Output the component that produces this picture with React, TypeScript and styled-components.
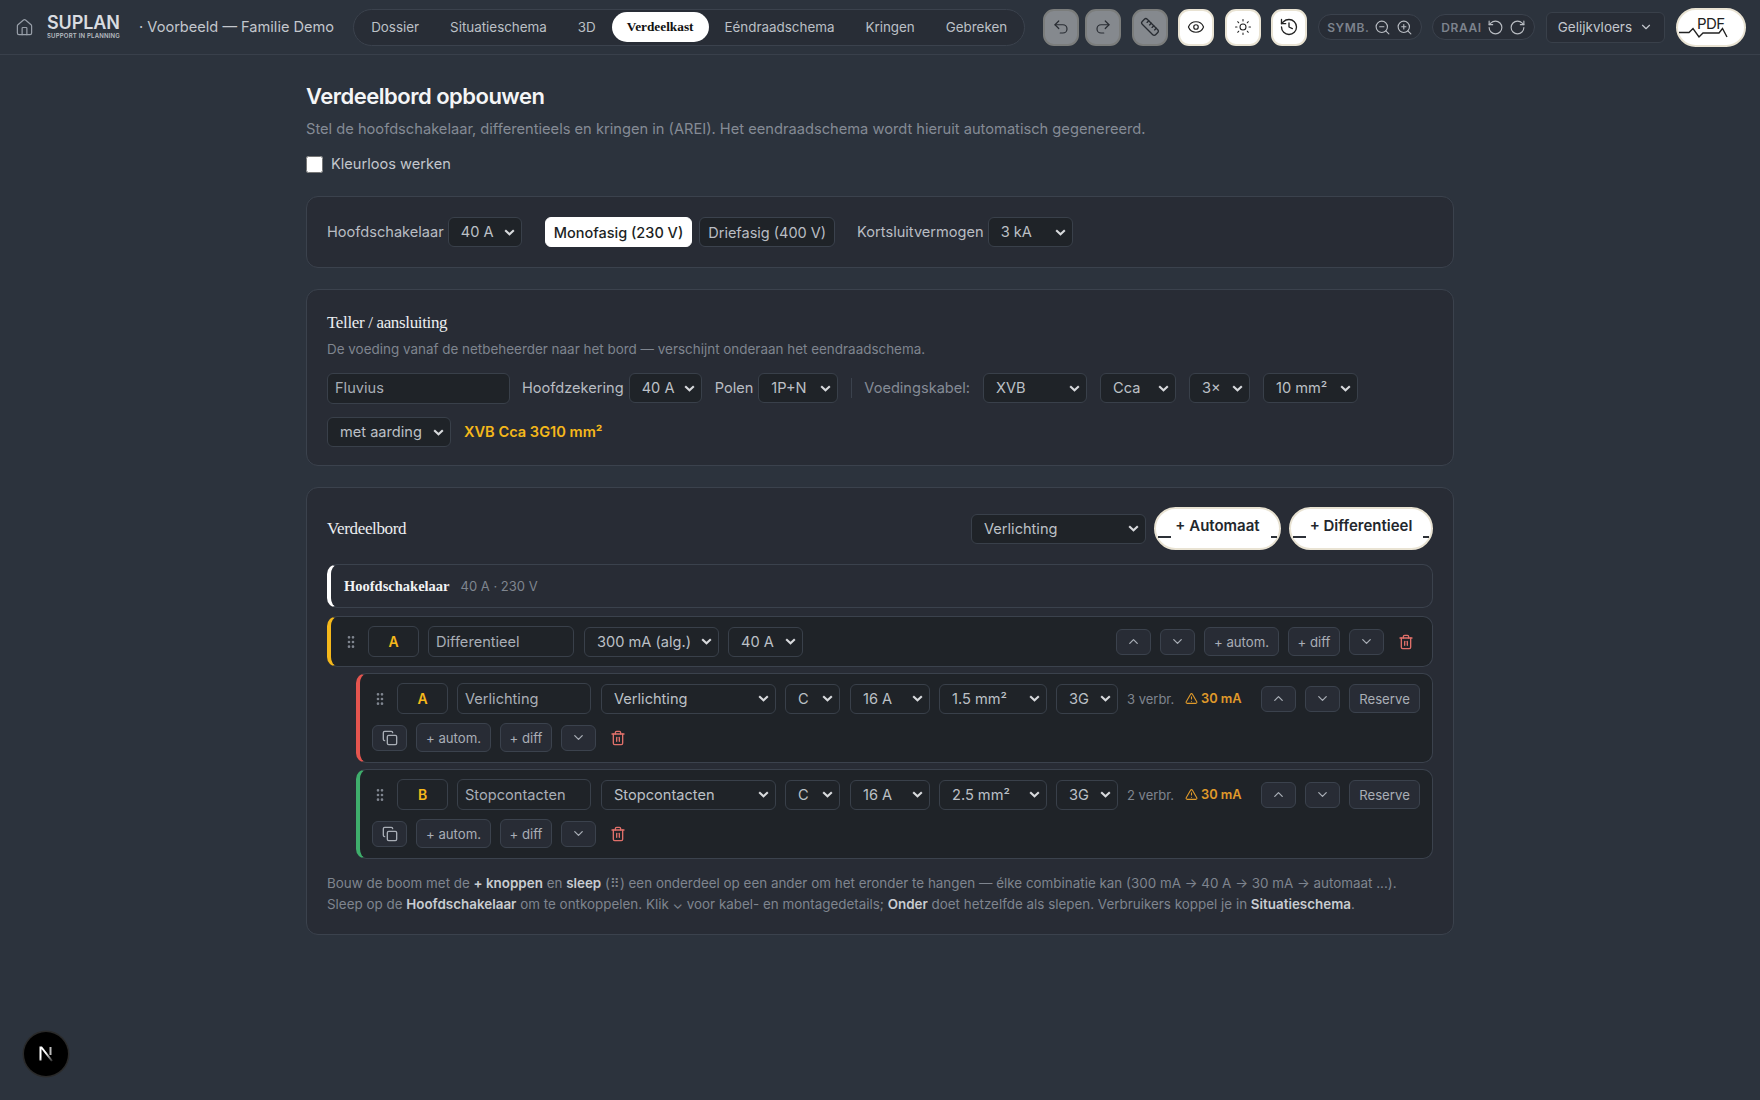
import styled, { createGlobalStyle } from 'styled-components'
import {
  ChevronDown,
  ChevronUp,
  Copy,
  Eye,
  GripVertical,
  History,
  House,
  Redo2,
  RotateCcw,
  RotateCw,
  Ruler,
  Sun,
  Trash2,
  TriangleAlert,
  Undo2,
  ZoomIn,
  ZoomOut,
} from 'lucide-react'

const GlobalStyle = createGlobalStyle`
  html, body {
    margin: 0;
    background: #2c333d;
    color: #e5e7eb;
    font-family: Inter, "Noto Sans", sans-serif;
    font-size: 14px;
    min-height: 1100px;
  }
  * { box-sizing: border-box; }
`

const selectArrow = `url("data:image/svg+xml,%3Csvg xmlns='http://www.w3.org/2000/svg' width='11' height='7' viewBox='0 0 11 7' fill='none'%3E%3Cpath d='M1.2 1.2 5.5 5.3 9.8 1.2' stroke='%23d8dadd' stroke-width='2.1'/%3E%3C/svg%3E")`

const Header = styled.header`
  height: 55px;
  display: flex;
  align-items: center;
  padding: 0 15px;
  border-bottom: 1px solid #39404b;
`

const HomeLink = styled.span`
  display: flex;
  color: #99a0aa;
  margin-right: 13px;
`

const Logo = styled.div`
  width: 74px;
  flex: none;
  display: flex;
  flex-direction: column;
  color: #d9dce0;
  margin-right: 18px;
`

const LogoName = styled.span`
  font-size: 18px;
  font-weight: 600;
  line-height: 18px;
  letter-spacing: -0.1px;
`

const LogoSub = styled.span`
  font-size: 6px;
  font-weight: 600;
  line-height: 8px;
  letter-spacing: 0.2px;
  color: #b8bcc2;
  white-space: nowrap;
`

const ProjectName = styled.span`
  font-size: 14.6px;
  color: #c3c7cd;
  margin-right: 19px;
  white-space: nowrap;
`

const Nav = styled.nav`
  height: 37px;
  flex: none;
  display: flex;
  align-items: center;
  gap: 1px;
  padding: 0 2px;
  border: 1px solid #3b424d;
  border-radius: 19px;
  background: #282d36;
  margin-right: 18px;
`

const Tab = styled.span<{ $active?: boolean }>`
  height: 30px;
  display: flex;
  align-items: center;
  padding: 0 15px;
  border-radius: 15px;
  font-size: ${p => (p.$active ? 13.3 : 13.4)}px;
  white-space: nowrap;
  color: ${p => (p.$active ? '#111' : '#bcc0c6')};
  background: ${p => (p.$active ? '#fff' : 'transparent')};
  font-family: ${p => (p.$active ? '"Liberation Serif", serif' : 'inherit')};
  font-weight: ${p => (p.$active ? 700 : 400)};
`

const ToolButton = styled.span<{ $dim?: boolean; $gap?: number }>`
  width: 36px;
  height: 37px;
  flex: none;
  display: flex;
  align-items: center;
  justify-content: center;
  border: 2px solid #e9e3d3;
  border-radius: 11px;
  background: #fff;
  color: #222;
  opacity: ${p => (p.$dim ? 0.42 : 1)};
  margin-right: ${p => p.$gap ?? 11}px;
`

const ToolPill = styled.div<{ $gap?: number }>`
  height: 26px;
  flex: none;
  display: flex;
  align-items: center;
  gap: 5px;
  padding: 0 8px;
  border: 1px solid #3b424d;
  border-radius: 13px;
  background: #282d36;
  color: #b9bdc3;
  margin-right: ${p => p.$gap ?? 10}px;
`

const PillLabel = styled.span`
  font-size: 12px;
  font-weight: 600;
  letter-spacing: 0.6px;
  color: #7d838d;
`

const FloorSelect = styled.div`
  width: 119px;
  height: 31px;
  flex: none;
  display: flex;
  align-items: center;
  justify-content: space-between;
  padding: 0 11px;
  border: 1px solid #39404a;
  border-radius: 6px;
  background: #282d36;
  color: #c3c7cd;
  font-size: 13.5px;
  margin: 0 11px 0 1px;
`

const PdfButton = styled.span`
  position: relative;
  width: 70px;
  height: 39px;
  flex: none;
  display: flex;
  align-items: center;
  justify-content: center;
  padding-bottom: 7px;
  border: 2px solid #e9e3d3;
  border-radius: 20px;
  background: #fff;
  color: #222;
  font-size: 15px;
  line-height: 16px;
  letter-spacing: -0.5px;
`

const PdfTrace = styled.svg`
  position: absolute;
  left: 0;
  top: 16px;
`

const Main = styled.main`
  width: 1148px;
  margin: 0 auto;
  padding-top: 27px;
`

const Title = styled.h1`
  margin: 0;
  font-size: 22px;
  line-height: 28px;
  font-weight: 600;
  color: #f4f5f6;
  letter-spacing: -0.5px;
`

const Lead = styled.p`
  margin: 8px 0 0;
  font-size: 14.67px;
  line-height: 22px;
  color: #858b95;
`

const CheckRow = styled.label`
  display: flex;
  align-items: center;
  gap: 8px;
  margin: 13px 0 21px;
  font-size: 14.6px;
  line-height: 22px;
  color: #c3c7cd;
`

const CheckBox = styled.input`
  width: 17px;
  height: 17px;
  margin: 0;
  accent-color: #fff;
`

const Card = styled.section`
  border: 1px solid #3b424d;
  border-radius: 12px;
  background: #282c35;
  padding: 20px;
  margin-bottom: 21px;
`

const MainRow = styled.div`
  display: flex;
  align-items: center;
  height: 30px;
`

const Label = styled.span<{ $gap?: number; $dim?: boolean }>`
  font-size: 14.6px;
  color: ${p => (p.$dim ? '#858b95' : '#b9bdc3')};
  margin-right: ${p => p.$gap ?? 4}px;
  white-space: nowrap;
`

const Select = styled.select<{ $w: number; $gap?: number }>`
  width: ${p => p.$w}px;
  height: 30px;
  flex: none;
  appearance: none;
  padding: 0 18px 0 12px;
  border: 1px solid #39404a;
  border-radius: 6px;
  background: #1f2328 ${selectArrow} no-repeat right 6px center;
  color: #bcc0c6;
  font-family: inherit;
  font-size: 14.6px;
  margin-right: ${p => p.$gap ?? 0}px;
`

const PhaseButton = styled.span<{ $active?: boolean; $gap?: number }>`
  height: 30px;
  display: flex;
  align-items: center;
  padding: 0 8px;
  border: 1px solid ${p => (p.$active ? '#fff' : '#3b424d')};
  border-radius: 6px;
  background: ${p => (p.$active ? '#fff' : '#1f2328')};
  color: ${p => (p.$active ? '#1c1f24' : '#b9bdc3')};
  font-size: 14.5px;
  font-weight: ${p => (p.$active ? 500 : 400)};
  margin-right: ${p => p.$gap ?? 0}px;
`

const SerifTitle = styled.h2`
  margin: 0;
  font-family: "Liberation Serif", serif;
  font-size: 17px;
  line-height: 26px;
  font-weight: 400;
  color: #eceef0;
  letter-spacing: -0.35px;
`

const Note = styled.p`
  margin: 3px 0 14px;
  font-size: 13.45px;
  line-height: 20px;
  color: #7f858f;
`

const TextField = styled.input<{ $w: number; $gap?: number; $h?: number }>`
  width: ${p => p.$w}px;
  height: ${p => p.$h ?? 31}px;
  flex: none;
  padding: 0 7px;
  border: 1px solid #39404a;
  border-radius: 6px;
  background: #1f2328;
  color: #a9aeb6;
  font-family: inherit;
  font-size: 14.6px;
  margin-right: ${p => p.$gap ?? 0}px;
`

const Divider = styled.span`
  width: 1px;
  height: 20px;
  background: #3b424d;
  margin: 0 12px 0 13px;
`

const CableRow = styled(MainRow)`
  margin-top: 14px;
  margin-bottom: -2px;
`

const CableCode = styled.span`
  font-size: 14.6px;
  font-weight: 600;
  color: #f5b81b;
  margin-left: 13px;
`

const BoardCard = styled(Card)`
  padding: 19px 20px 19px;
  margin-bottom: 0;
`

const BoardHead = styled.div`
  display: flex;
  align-items: center;
  height: 43px;
  margin-bottom: 14px;
`

const BoardTitle = styled(SerifTitle)`
  flex: 1;
`

const AddButton = styled.span<{ $w: number }>`
  position: relative;
  width: ${p => p.$w}px;
  height: 43px;
  display: flex;
  justify-content: center;
  padding-top: 8px;
  border: 2px solid #e9e3d3;
  border-radius: 22px;
  background: #fff;
  color: #23272d;
  font-size: 15px;
  font-weight: 600;
  line-height: 18px;
  margin-left: 8px;
  &::before, &::after {
    content: '';
    position: absolute;
    top: 27px;
    height: 1.5px;
    background: #2d3138;
  }
  &::before { left: 2px; width: 13px; }
  &::after { right: 2px; width: 6px; }
`

const Row = styled.div<{ $accent: string; $dark?: boolean; $nested?: boolean }>`
  border: 1px solid #3b424d;
  border-left: 4px solid ${p => p.$accent};
  border-radius: 10px;
  background: ${p => (p.$dark ? '#1f2328' : 'transparent')};
  margin-left: ${p => (p.$nested ? 29 : 0)}px;
  margin-top: ${p => (p.$nested ? 6 : 8)}px;
`

const MainSwitch = styled(Row)`
  height: 44px;
  display: flex;
  align-items: center;
  padding-left: 13px;
  margin-top: 0;
`

const SwitchName = styled.span`
  font-family: "Liberation Serif", serif;
  font-weight: 700;
  font-size: 14.5px;
  color: #f1f2f3;
  margin-right: 11px;
`

const SwitchValue = styled.span`
  font-size: 13px;
  color: #7f858f;
`

const ItemLine = styled.div`
  display: flex;
  align-items: center;
  height: 31px;
`

const DiffRow = styled(Row)`
  padding: 9px 18px 9px 12px;
`

const CircuitRow = styled(Row)`
  padding: 9px 11px 10px 12px;
  height: 90px;
`

const ActionLine = styled(ItemLine)`
  margin-top: 9px;
  height: 29px;
`

const Grip = styled.span`
  display: flex;
  color: #7f858f;
  width: 16px;
  margin-right: 9px;
`

const CodeBox = styled.span`
  width: 51px;
  height: 31px;
  flex: none;
  display: flex;
  align-items: center;
  justify-content: center;
  border: 1px solid #39404a;
  border-radius: 6px;
  color: #f5b81b;
  font-size: 14px;
  font-weight: 600;
  margin-right: 9px;
`

const Push = styled.span`
  flex: 1;
`

const SmallButton = styled.span<{ $w?: number; $h?: number; $gap?: number }>`
  width: ${p => (p.$w ? `${p.$w}px` : 'auto')};
  height: ${p => p.$h ?? 26}px;
  flex: none;
  display: flex;
  align-items: center;
  justify-content: center;
  border: 1px solid #3b424d;
  border-radius: 6px;
  background: #282c35;
  color: #a9aeb6;
  font-size: 13.2px;
  margin-right: ${p => p.$gap ?? 9}px;
`

const TrashIcon = styled.span`
  display: flex;
  color: #e0706a;
  margin-left: 5px;
`

const Count = styled.span`
  font-size: 13px;
  color: #7f858f;
  margin-left: 9px;
  width: 58px;
  white-space: nowrap;
`

const Warning = styled.span`
  display: flex;
  align-items: center;
  gap: 3px;
  font-size: 12.8px;
  font-weight: 600;
  color: #e09a2a;
  width: 76px;
  white-space: nowrap;
`

const HelpText = styled.p`
  margin: 14px 0 0;
  font-size: 13.42px;
  line-height: 20.8px;
  color: #7f858f;
  strong {
    color: #c9ccd1;
    font-weight: 600;
  }
`

const DevBadge = styled.div`
  position: fixed;
  left: 24px;
  bottom: 24px;
  width: 44px;
  height: 44px;
  display: flex;
  align-items: center;
  justify-content: center;
  border-radius: 50%;
  background: #000;
  box-shadow: 0 0 0 1.5px #2a2a2a;
`

type Opt = { value: string; w: number; gap?: number }

function Drop({ value, w, gap }: Opt) {
  return (
    <Select $w={w} $gap={gap} defaultValue={value}>
      <option>{value}</option>
    </Select>
  )
}

function Circuit({ accent, code, name, section, count }: { accent: string; code: string; name: string; section: string; count: string }) {
  return (
    <CircuitRow $accent={accent} $dark $nested>
      <ItemLine>
        <Grip><GripVertical size={16} /></Grip>
        <CodeBox>{code}</CodeBox>
        <TextField $w={134} $gap={10} defaultValue={name} />
        <Drop value={name} w={175} gap={9} />
        <Drop value="C" w={55} gap={10} />
        <Drop value="16 A" w={80} gap={9} />
        <Drop value={section} w={108} gap={9} />
        <Drop value="3G" w={62} />
        <Count>{count}</Count>
        <Warning><TriangleAlert size={13} />30 mA</Warning>
        <SmallButton $w={35}><ChevronUp size={15} /></SmallButton>
        <SmallButton $w={35}><ChevronDown size={15} /></SmallButton>
        <SmallButton $w={71} $h={29} $gap={0}>Reserve</SmallButton>
      </ItemLine>
      <ActionLine>
        <SmallButton $w={35}><Copy size={16} /></SmallButton>
        <SmallButton $w={75} $h={29}>+ autom.</SmallButton>
        <SmallButton $w={52} $h={29}>+ diff</SmallButton>
        <SmallButton $w={35}><ChevronDown size={15} /></SmallButton>
        <TrashIcon><Trash2 size={16} /></TrashIcon>
      </ActionLine>
    </CircuitRow>
  )
}

export default function App() {
  return (
    <>
      <GlobalStyle />
      <Header>
        <HomeLink><House size={19} strokeWidth={1.5} /></HomeLink>
        <Logo>
          <LogoName>SUPLAN</LogoName>
          <LogoSub>SUPPORT IN PLANNING</LogoSub>
        </Logo>
        <ProjectName>· Voorbeeld — Familie Demo</ProjectName>
        <Nav>
          <Tab>Dossier</Tab>
          <Tab>Situatieschema</Tab>
          <Tab>3D</Tab>
          <Tab $active>Verdeelkast</Tab>
          <Tab>Eéndraadschema</Tab>
          <Tab>Kringen</Tab>
          <Tab>Gebreken</Tab>
        </Nav>
        <ToolButton $dim $gap={6}><Undo2 size={18} strokeWidth={1.6} /></ToolButton>
        <ToolButton $dim><Redo2 size={18} strokeWidth={1.6} /></ToolButton>
        <ToolButton $dim $gap={10}><Ruler size={20} strokeWidth={1.6} /></ToolButton>
        <ToolButton><Eye size={18} strokeWidth={1.6} /></ToolButton>
        <ToolButton $gap={10}><Sun size={18} strokeWidth={1.4} /></ToolButton>
        <ToolButton><History size={20} strokeWidth={1.6} /></ToolButton>
        <ToolPill>
          <PillLabel>SYMB.</PillLabel>
          <ZoomOut size={17} strokeWidth={1.6} />
          <ZoomIn size={17} strokeWidth={1.6} />
        </ToolPill>
        <ToolPill>
          <PillLabel>DRAAI</PillLabel>
          <RotateCcw size={17} strokeWidth={1.6} />
          <RotateCw size={17} strokeWidth={1.6} />
        </ToolPill>
        <FloorSelect>Gelijkvloers<ChevronDown size={14} /></FloorSelect>
        <PdfButton>
          PDF
          <PdfTrace width="66" height="16" viewBox="0 0 66 16" fill="none" stroke="#222" strokeWidth="1.4">
            <path d="M1 6.5 H11 L15 2.5 L21 11 L25 7 H41 L44.5 2.5 L49 11" />
          </PdfTrace>
        </PdfButton>
      </Header>
      <Main>
        <Title>Verdeelbord opbouwen</Title>
        <Lead>Stel de hoofdschakelaar, differentieels en kringen in (AREI). Het eendraadschema wordt hieruit automatisch gegenereerd.</Lead>
        <CheckRow>
          <CheckBox type="checkbox" />
          Kleurloos werken
        </CheckRow>

        <Card>
          <MainRow>
            <Label>Hoofdschakelaar</Label>
            <Drop value="40 A" w={74} gap={23} />
            <PhaseButton $active $gap={7}>Monofasig (230 V)</PhaseButton>
            <PhaseButton $gap={22}>Driefasig (400 V)</PhaseButton>
            <Label>Kortsluitvermogen</Label>
            <Drop value="3 kA" w={85} />
          </MainRow>
        </Card>

        <Card>
          <SerifTitle>Teller / aansluiting</SerifTitle>
          <Note>De voeding vanaf de netbeheerder naar het bord — verschijnt onderaan het eendraadschema.</Note>
          <MainRow>
            <TextField $w={183} $gap={12} defaultValue="Fluvius" />
            <Label $gap={5}>Hoofdzekering</Label>
            <Drop value="40 A" w={73} gap={13} />
            <Label $gap={5}>Polen</Label>
            <Drop value="1P+N" w={80} />
            <Divider />
            <Label $dim $gap={13}>Voedingskabel:</Label>
            <Drop value="XVB" w={104} gap={13} />
            <Drop value="Cca" w={76} gap={13} />
            <Drop value="3×" w={61} gap={13} />
            <Drop value="10 mm²" w={95} />
          </MainRow>
          <CableRow>
            <Drop value="met aarding" w={124} />
            <CableCode>XVB Cca 3G10 mm²</CableCode>
          </CableRow>
        </Card>

        <BoardCard>
          <BoardHead>
            <BoardTitle>Verdeelbord</BoardTitle>
            <Drop value="Verlichting" w={175} />
            <AddButton $w={127}>+ Automaat</AddButton>
            <AddButton $w={144}>+ Differentieel</AddButton>
          </BoardHead>
          <MainSwitch $accent="#ffffff">
            <SwitchName>Hoofdschakelaar</SwitchName>
            <SwitchValue>40 A · 230 V</SwitchValue>
          </MainSwitch>
          <DiffRow $accent="#f5b81b" $dark>
            <ItemLine>
              <Grip><GripVertical size={16} /></Grip>
              <CodeBox>A</CodeBox>
              <TextField $w={146} $gap={10} defaultValue="Differentieel" />
              <Drop value="300 mA (alg.)" w={135} gap={9} />
              <Drop value="40 A" w={75} />
              <Push />
              <SmallButton $w={35}><ChevronUp size={15} /></SmallButton>
              <SmallButton $w={35}><ChevronDown size={15} /></SmallButton>
              <SmallButton $w={75} $h={29}>+ autom.</SmallButton>
              <SmallButton $w={52} $h={29}>+ diff</SmallButton>
              <SmallButton $w={35}><ChevronDown size={15} /></SmallButton>
              <TrashIcon><Trash2 size={16} /></TrashIcon>
            </ItemLine>
          </DiffRow>
          <Circuit accent="#e5554f" code="A" name="Verlichting" section="1.5 mm²" count="3 verbr." />
          <Circuit accent="#3fae6c" code="B" name="Stopcontacten" section="2.5 mm²" count="2 verbr." />
          <HelpText>
            Bouw de boom met de <strong>+ knoppen</strong> en <strong>sleep</strong> (⠿) een onderdeel op een ander om het eronder te hangen — élke combinatie kan (300 mA → 40 A → 30 mA → automaat ...).
            <br />
            Sleep op de <strong>Hoofdschakelaar</strong> om te ontkoppelen. Klik ⌄ voor kabel- en montagedetails; <strong>Onder</strong> doet hetzelfde als slepen. Verbruikers koppel je in <strong>Situatieschema</strong>.
          </HelpText>
        </BoardCard>
      </Main>
      <DevBadge>
        <svg width="18" height="18" viewBox="0 0 18 18" fill="none">
          <defs>
            <linearGradient id="badgeFade" x1="4" y1="3" x2="15" y2="16" gradientUnits="userSpaceOnUse">
              <stop offset="0.4" stopColor="#fff" />
              <stop offset="1" stopColor="#fff" stopOpacity="0.2" />
            </linearGradient>
          </defs>
          <path d="M3.5 15.5 V2.5 H4.5 L15 16" stroke="url(#badgeFade)" strokeWidth="2" />
          <path d="M13.5 2 V10" stroke="#bbb" strokeWidth="2" />
        </svg>
      </DevBadge>
    </>
  )
}
